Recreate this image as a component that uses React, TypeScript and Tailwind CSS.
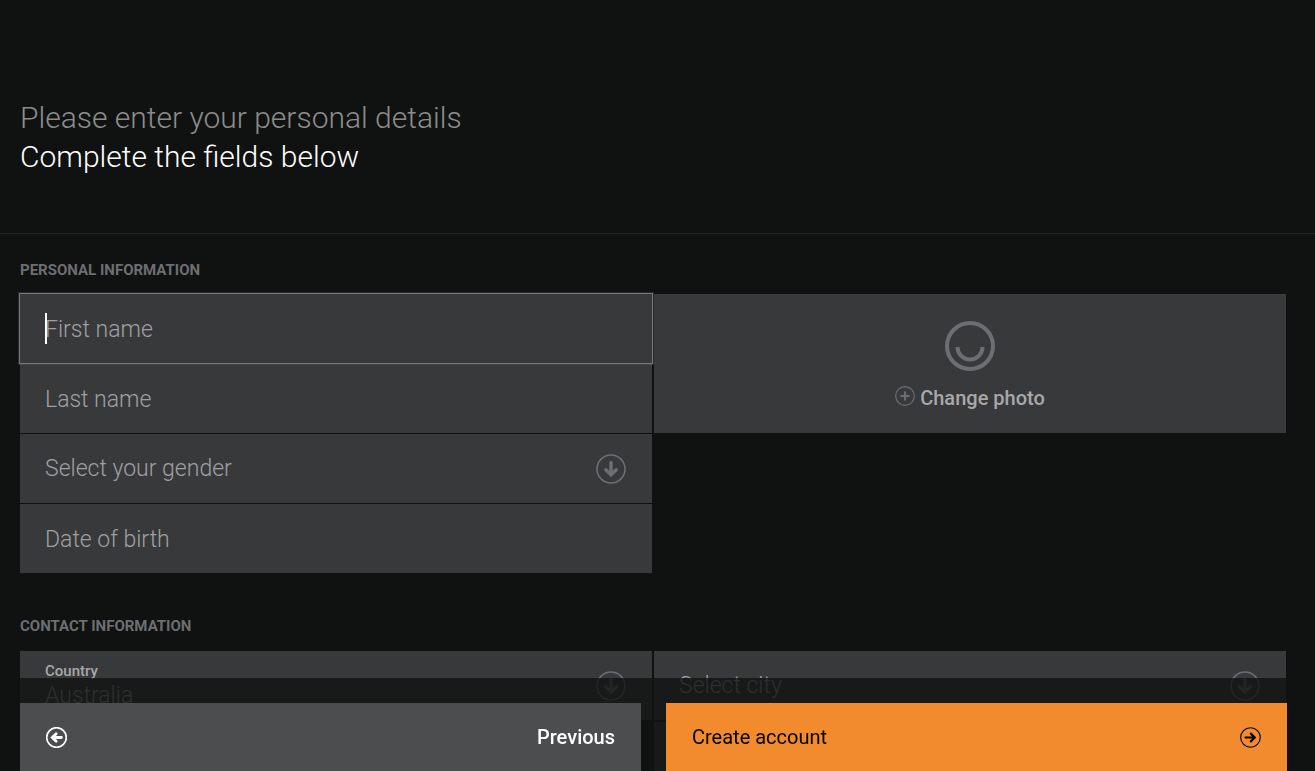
import type { ReactNode } from 'react';

type ArrowDirection = 'down' | 'left' | 'right';

const arrowPaths: Record<ArrowDirection, string> = {
  down: 'M15 8.5V20M9.8 15.8L15 20.8L20.2 15.8',
  left: 'M22 15H10M14.5 9.5L9 15L14.5 20.5',
  right: 'M8 15H20M15.5 9.5L21 15L15.5 20.5',
};

function CircleArrow({
  direction,
  className,
  ring = 2,
  stroke = 3,
}: {
  direction: ArrowDirection;
  className: string;
  ring?: number;
  stroke?: number;
}) {
  return (
    <svg viewBox="0 0 30 30" fill="none" stroke="currentColor" className={className} aria-hidden="true">
      <circle cx="15" cy="15" r="14" strokeWidth={ring} />
      <path d={arrowPaths[direction]} strokeWidth={stroke} strokeLinecap="round" />
    </svg>
  );
}

function SectionTitle({ children }: { children: ReactNode }) {
  return <h2 className="text-[15px] leading-5 font-bold uppercase text-[#6d6e71]">{children}</h2>;
}

const baseField =
  'block h-[69px] w-full appearance-none rounded-none bg-[#38393b] px-[25px] text-[23px] leading-8 font-light text-[#a0a0a1] outline-none';
const inputClass = `${baseField} pt-[2px] placeholder:text-[#a0a0a1] placeholder:opacity-100`;

function TextField({ label, name }: { label: string; name: string }) {
  return <input type="text" name={name} aria-label={label} placeholder={label} className={inputClass} />;
}

function SelectArrow() {
  return (
    <CircleArrow
      direction="down"
      className="pointer-events-none absolute top-5 right-[26px] size-[30px] text-[#6d6e71]"
      ring={1.6}
      stroke={3.4}
    />
  );
}

function SelectField({ label, name }: { label: string; name: string }) {
  return (
    <div className="relative">
      <select name={name} aria-label={label} className={baseField}>
        <option>{label}</option>
      </select>
      <SelectArrow />
    </div>
  );
}

export default function App() {
  return (
    <div className="h-screen overflow-y-auto bg-[#101211] font-['Roboto',sans-serif] [scrollbar-width:none]">
      <header className="border-b border-[#252727] px-5 pt-[98px] pb-[57px]">
        <h1 className="text-[30px] leading-[39px] font-light text-white">
          <span className="block text-[#8c8c8c]">Please enter your personal details</span>
          Complete the fields below
        </h1>
      </header>

      <form className="pt-[26px] pr-[29px] pb-24 pl-5">
        <SectionTitle>Personal information</SectionTitle>
        <div className="mt-[14px] grid grid-cols-2 items-start gap-x-[2px]">
          <div className="flex flex-col gap-px">
            <div className="relative z-10 shadow-[0_0_0_1px_#77787a,0_0_0_2px_#77787a40]">
              <TextField label="First name" name="firstName" />
              <span className="absolute top-[19px] left-[25px] h-[31px] w-[2px] bg-white" />
            </div>
            <TextField label="Last name" name="lastName" />
            <SelectField label="Select your gender" name="gender" />
            <TextField label="Date of birth" name="birthDate" />
          </div>

          <button type="button" className="flex h-[139px] flex-col items-center bg-[#38393b] pt-[27px]">
            <svg viewBox="0 0 50 50" fill="none" stroke="#6d6e71" strokeWidth="4" className="size-[50px]" aria-hidden="true">
              <circle cx="25" cy="25" r="23" />
              <path d="M12.5 26A12.5 12.5 0 0 0 37.5 26" />
            </svg>
            <span className="mt-[13px] flex items-start gap-[5px] text-xl leading-7 font-medium text-[#a8a8a9]">
              <svg viewBox="0 0 20 20" fill="none" stroke="#6d6e71" className="mt-[2px] size-5" aria-hidden="true">
                <circle cx="10" cy="10" r="9.3" strokeWidth="1.2" />
                <path d="M10 5.5V14.5M5.5 10H14.5" strokeWidth="2" />
              </svg>
              Change photo
            </span>
          </button>
        </div>

        <div className="mt-[43px]">
          <SectionTitle>Contact information</SectionTitle>
        </div>
        <div className="mt-[15px] grid grid-cols-2 gap-[2px]">
          <div className="relative h-[69px] bg-[#38393b]">
            <label htmlFor="country" className="absolute top-[10px] left-[25px] text-[15px] leading-5 font-medium text-[#a8a8a9]">
              Country
            </label>
            <select
              id="country"
              name="country"
              className="block h-full w-full appearance-none px-[25px] pt-5 text-[23px] leading-8 font-light text-[#a0a0a1] outline-none"
            >
              <option>Australia</option>
            </select>
            <SelectArrow />
          </div>
          <SelectField label="Select city" name="city" />
          <div className="col-start-2 h-[69px] bg-[#38393b]" />
        </div>
      </form>

      <footer className="fixed inset-x-0 bottom-0 z-20 grid grid-cols-2 gap-[25px] bg-[#101211]/80 pt-[25px] pr-7 pl-5">
        <button
          type="button"
          className="flex h-[68px] items-center justify-between bg-[#4c4d4f] px-[26px] text-xl leading-7 font-medium text-white"
        >
          <CircleArrow direction="left" className="size-[21px]" ring={2.4} stroke={4} />
          Previous
        </button>
        <button
          type="submit"
          className="flex h-[68px] items-center justify-between bg-[#f18b2e] px-[26px] text-xl leading-7 text-black"
        >
          Create account
          <CircleArrow direction="right" className="size-[21px]" ring={1.6} stroke={3.2} />
        </button>
      </footer>
    </div>
  );
}
